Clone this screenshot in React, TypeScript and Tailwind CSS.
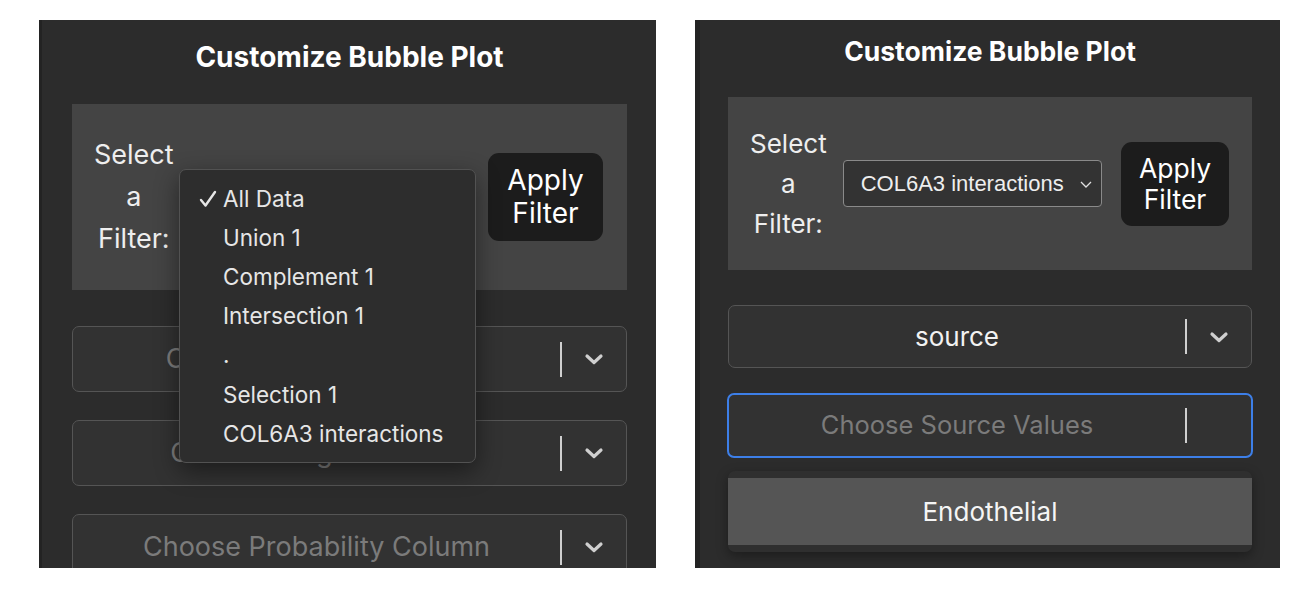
import React from 'react'

const sans = { fontFamily: 'Inter, "Noto Sans", sans-serif' }

function Chevron() {
  return (
    <svg width="22" height="14" viewBox="0 0 22 14" className="shrink-0">
      <path d="M4 4 L11 10.5 L18 4" fill="none" stroke="#cfcfcf" strokeWidth="3.2" strokeLinecap="round" strokeLinejoin="round" />
    </svg>
  )
}

function ComboBox({
  label,
  placeholder,
  h,
  textSize,
  focused,
  arrow = true,
}: {
  label: string
  placeholder?: boolean
  h: string
  textSize: string
  focused?: boolean
  arrow?: boolean
}) {
  return (
    <div
      className={`flex items-center rounded-[7px] bg-[#323232] ${h} ${
        focused ? 'border-2 border-[#3d7fe8]' : 'border border-[#555]'
      }`}
    >
      <div
        className={`flex-1 text-center whitespace-nowrap ${textSize} ${placeholder ? 'text-[#7b7b7b]' : 'text-[#f2f2f2]'}`}
      >
        {label}
      </div>
      <div className="w-[2px] h-[35px] bg-[#cfcfcf]" />
      <div className="w-[64px] flex items-center justify-center">{arrow && <Chevron />}</div>
    </div>
  )
}

const options = ['All Data', 'Union 1', 'Complement 1', 'Intersection 1', '.', 'Selection 1', 'COL6A3 interactions']

function CheckMark() {
  return (
    <svg width="20" height="20" viewBox="0 0 20 20">
      <path d="M3 11 L7.5 16.5 L17 3" fill="none" stroke="#e6e6e6" strokeWidth="2.4" strokeLinecap="round" strokeLinejoin="round" />
    </svg>
  )
}

function LeftPanel() {
  return (
    <div
      className="relative w-[617px] h-[548px] bg-[#2c2c2c] border-l-[3px] border-[#232323] pl-[30px] pr-[29px] overflow-hidden"
      style={sans}
    >
      <h2 className="pt-[22px] text-center text-[28px] leading-[30px] font-bold text-white">
        Customize Bubble Plot
      </h2>

      <div className="mt-[32px] h-[186px] bg-[#444] flex items-center pl-[22px] pr-[24px]">
        <div className="text-center text-[27px] leading-[42px] text-[#eee]">
          Select
          <br />a
          <br />
          Filter:
        </div>
        <div className="flex-1" />
        <button
          type="button"
          className="w-[115px] h-[88px] rounded-[11px] bg-[#1c1c1c] text-white text-[28px] leading-[33px]"
        >
          Apply
          <br />
          Filter
        </button>
      </div>

      <div className="mt-[36px] flex flex-col gap-[28px]">
        <ComboBox label="Choose Source Column" placeholder h="h-[66px]" textSize="text-[27px]" />
        <ComboBox label="Choose Target Column" placeholder h="h-[66px]" textSize="text-[27px]" />
        <ComboBox label="Choose Probability Column" placeholder h="h-[66px]" textSize="text-[27px]" />
      </div>

      {/* open native select menu */}
      <div className="absolute left-[137px] top-[149px] w-[297px] py-[9px] rounded-[7px] bg-[#2d2d2d] border border-[#525252] shadow-[0_8px_24px_rgba(0,0,0,0.45)]">
        {options.map((o, i) => (
          <div key={o} className="h-[39.2px] flex items-center text-[22.5px] text-[#e6e6e6] whitespace-nowrap">
            <span className="w-[43px] pl-[18px] flex items-center">{i === 0 && <CheckMark />}</span>
            <span>{o}</span>
          </div>
        ))}
      </div>
    </div>
  )
}

function RightPanel() {
  return (
    <div
      className="w-[585px] h-[548px] bg-[#2c2c2c] border-l-[5px] border-[#232323] pl-[28px] pr-[28px] overflow-hidden"
      style={sans}
    >
      <h2 className="pt-[17px] text-center text-[26.5px] leading-[28px] font-bold text-white">
        Customize Bubble Plot
      </h2>

      <div className="mt-[32px] h-[173px] bg-[#444] flex items-center pl-[22px] pr-[23px]">
        <div className="text-center text-[26px] leading-[40px] text-[#eee]">
          Select
          <br />a
          <br />
          Filter:
        </div>
        <div
          className="ml-[16px] w-[259px] h-[47px] flex items-center justify-between pl-[17px] pr-[8px] rounded-[4px] bg-[#333] border border-[#8a8a8a] text-[22px] text-[#eee]"
          style={{ fontFamily: '"Liberation Sans", Arial, sans-serif' }}
        >
          <span>COL6A3 interactions</span>
          <svg width="14" height="10" viewBox="0 0 14 10">
            <path d="M2 3 L7 8 L12 3" fill="none" stroke="#e0e0e0" strokeWidth="1.3" />
          </svg>
        </div>
        <div className="flex-1" />
        <button
          type="button"
          className="w-[108px] h-[84px] rounded-[11px] bg-[#1c1c1c] text-white text-[26.5px] leading-[31px]"
        >
          Apply
          <br />
          Filter
        </button>
      </div>

      <div className="mt-[35px]">
        <ComboBox label="source" h="h-[63px]" textSize="text-[26px]" />
      </div>
      <div className="mt-[25px] -mx-px">
        <ComboBox label="Choose Source Values" placeholder focused arrow={false} h="h-[65px]" textSize="text-[25.5px]" />
      </div>
      <div className="mt-[13px] py-[7px] rounded-[7px] bg-[#2f2f2f] shadow-[0_4px_12px_rgba(0,0,0,0.35)]">
        <div className="h-[67px] bg-[#555] flex items-center justify-center text-[26px] text-[#f5f5f5]">
          Endothelial
        </div>
      </div>
    </div>
  )
}

export default function App() {
  return (
    <div className="w-[1306px] h-[596px] bg-white flex items-start gap-[39px] pl-[39px] pt-[20px]">
      <LeftPanel />
      <RightPanel />
    </div>
  )
}
